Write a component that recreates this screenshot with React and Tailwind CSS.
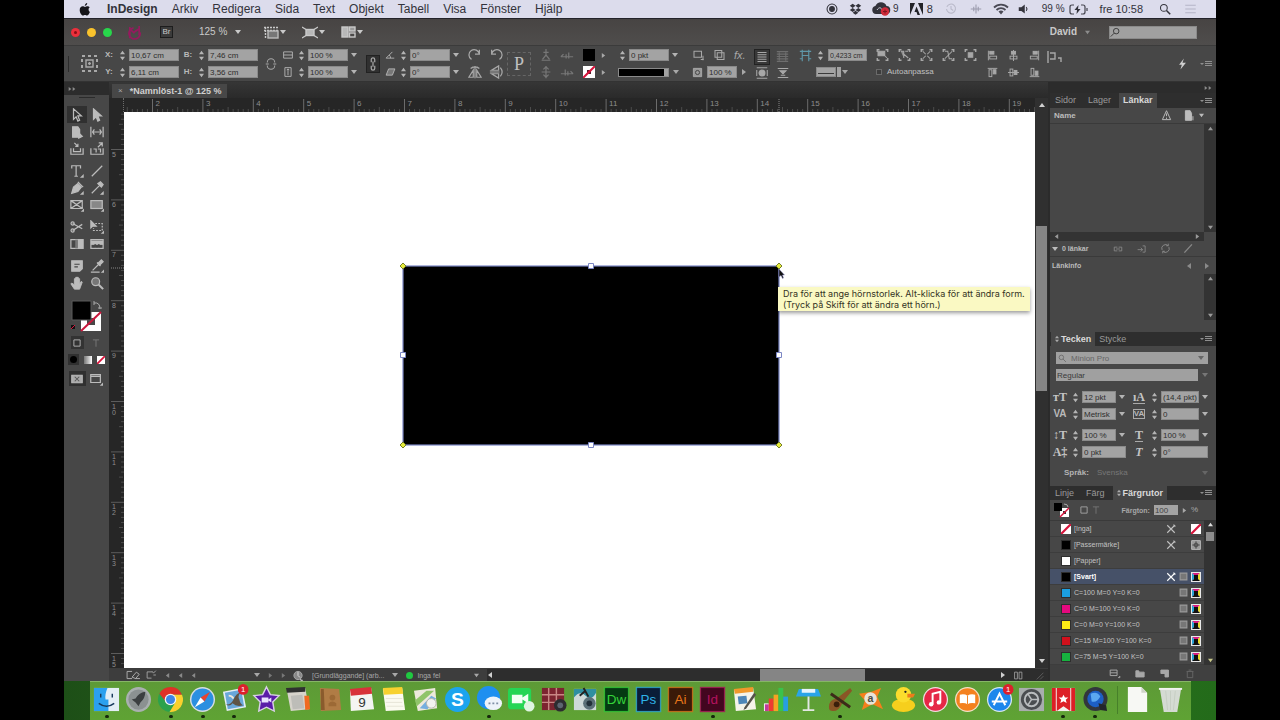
import React from "react";

/* ---------- small drawing helpers ---------- */

function Glyph({ w = 14, h = 14, vb = "0 0 16 16", className = "", children }) {
  return (
    <svg
      width={w}
      height={h}
      viewBox={vb}
      className={"shrink-0 " + className}
      fill="none"
      stroke="currentColor"
      strokeWidth="1.4"
      aria-hidden="true"
    >
      {children}
    </svg>
  );
}

function IconButton({ label, className = "", children }) {
  return (
    <button type="button" aria-label={label} className={"flex shrink-0 items-center justify-center " + className}>
      {children}
    </button>
  );
}

function Triangle({ dir = "down", size = 6, className = "" }) {
  const d = {
    down: "M0 1h6L3 5z",
    up: "M0 5h6L3 1z",
    left: "M5 0v6L1 3z",
    right: "M1 0v6l4-3z",
  }[dir];
  return (
    <svg width={size} height={size} viewBox="0 0 6 6" className={"shrink-0 " + className} fill="currentColor" aria-hidden="true">
      <path d={d} />
    </svg>
  );
}

function Spinner({ label }) {
  return (
    <span className="flex w-2 shrink-0 flex-col items-center justify-center gap-px text-[#b4b4b4]">
      <button type="button" aria-label={"Öka " + label} className="flex">
        <Triangle dir="up" size={5} />
      </button>
      <button type="button" aria-label={"Minska " + label} className="flex">
        <Triangle size={5} />
      </button>
    </span>
  );
}

const fieldBase =
  "h-3 min-w-0 border border-[#8a8a8a] bg-[#a3a3a3] px-px leading-[10px] text-[#2e2e2e] outline-none";
const fieldClass = fieldBase + " text-[8px]";

function Field({ label, value, lead, width = "w-[50px]", arrow, leadWidth = "w-3" }) {
  return (
    <div className="flex h-3 items-center gap-[3px]">
      {lead !== undefined && (
        <span className={"flex shrink-0 items-center justify-center text-[8px] font-bold leading-none text-[#b9b9b9] " + leadWidth}>{lead}</span>
      )}
      <Spinner label={label} />
      <input aria-label={label} defaultValue={value} className={fieldClass + " " + width} />
      {arrow && (
        <IconButton label={"Välj " + label} className="text-[#b4b4b4]">
          <Triangle />
        </IconButton>
      )}
    </div>
  );
}

/* ---------- top bars ---------- */

const menus = ["Arkiv", "Redigera", "Sida", "Text", "Objekt", "Tabell", "Visa", "Fönster", "Hjälp"];

function MenuBar() {
  return (
    <header className="flex h-[18px] shrink-0 items-center bg-[#dcdcec] text-[12px] leading-none text-[#33333b]">
      <IconButton label="Apple" className="ml-[15px] mr-4">
        <svg width="12" height="13" viewBox="0 0 12 13" fill="#15151a" aria-hidden="true">
          <path d="M8.2 0C8.3 1.4 7.2 2.8 5.8 2.9 5.7 1.5 6.9.2 8.2 0zM10.9 9.1C10.2 10.9 9.1 12.6 8 12.6c-.8 0-1.1-.5-2-.5s-1.2.5-2 .5C2.5 12.6.7 9.6.7 7 .7 4.6 2.2 3.3 3.7 3.3c.9 0 1.7.6 2.3.6.6 0 1.5-.7 2.6-.7.9 0 1.6.4 2.1 1.1C9 5.4 9.3 8.2 10.9 9.1z" />
        </svg>
      </IconButton>
      <nav className="flex items-center gap-[14px]">
        <button type="button" className="font-bold">InDesign</button>
        {menus.map((m) => (
          <button type="button" key={m}>{m}</button>
        ))}
      </nav>
      <div className="ml-auto mr-[18px] flex items-center gap-[9px]">
        <Glyph w={12} h={12}>
          <circle cx="8" cy="8" r="6.6" />
          <circle cx="8" cy="8" r="3.2" fill="currentColor" />
        </Glyph>
        <Glyph w={13} h={13} className="ml-[2px]">
          <path fill="currentColor" stroke="none" d="M4.5 1 8 3.5 4.5 6 1 3.5zM11.500 1 15 3.500 11.500 6 8 3.500zM4.500 6 8 8.500 4.500 11 1 8.500zM11.500 6 15 8.500 11.500 11 8 8.500zM8 9.500l3.500 2.500L8 14.500 4.500 12z" />
        </Glyph>
        <span className="flex items-center gap-[2px] text-[10px]">
          <svg width="20" height="14" viewBox="0 0 20 14" aria-hidden="true">
            <path fill="#33333b" d="M5 12a4 4 0 0 1-.6-7.900A6 6 0 0 1 15.500 4 4 4 0 0 1 15 12z" />
            <path d="M6 8c2-3 4-3 5 0" fill="none" stroke="#c9c9d6" />
            <circle cx="14" cy="9.500" r="4.200" fill="#cf2b3a" />
            <path d="M14 7.500v4M12 9.500h4" stroke="#7d1520" />
          </svg>
          9
        </span>
        <span className="ml-[2px] flex items-center gap-1 text-[11px]">
          <svg width="13" height="12" viewBox="0 0 13 12" fill="#222228" aria-hidden="true">
            <path d="M0 0h5L0 12zM8 0h5v12zM6.500 3.500 10 12H7.500L6.500 9H4.500z" />
          </svg>
          8
        </span>
        <Glyph w={12} h={12} className="ml-[3px] text-[#b9b9c9]">
          <path d="M2.500 5A6 6 0 1 1 2 8M8 4v4l3 2" />
        </Glyph>
        <Glyph w={12} h={12} className="ml-1 text-[#9c9cad]">
          <path d="M1 8h14M8 2v12M5 5v6M11 5v6" />
        </Glyph>
        <svg width="16" height="12" viewBox="0 0 16 12" fill="none" stroke="#4a4a55" strokeWidth="1.800" className="ml-[2px]" aria-hidden="true">
          <path d="M1 4.500a10 10 0 0 1 14 0M3.500 7a6.500 6.500 0 0 1 9 0" />
          <path d="M5.500 8.500a4 4 0 0 1 5 0L8 11.500z" fill="#4a4a55" stroke="none" />
        </svg>
        <Glyph w={12} h={12}>
          <path fill="currentColor" stroke="none" d="M1 5.500h3.500L9 2v12L4.500 10.500H1z" />
          <path d="M11 5.500q2 2.500 0 5" />
        </Glyph>
        <span className="ml-[3px] flex items-center gap-1 text-[10px]">
          99 %
          <svg width="19" height="11" viewBox="0 0 19 11" fill="none" stroke="#44444e" strokeWidth="1.200" aria-hidden="true">
            <path d="M5 1H3Q1 1 1 3v5q0 2 2 2h2M12 1h2q2 0 2 2v5q0 2-2 2h-2M18 4v3" />
            <path d="M9.500 1 5.500 6h2.500l-.5 4 4-5H9z" fill="#33333b" stroke="none" />
          </svg>
        </span>
        <span className="ml-[3px] text-[11px]">fre 10:58</span>
        <IconButton label="Sök" className="ml-[7px]">
          <Glyph w={12} h={12}>
            <circle cx="6.500" cy="6.500" r="4.500" />
            <path d="m10 10 5 5" strokeWidth="2" />
          </Glyph>
        </IconButton>
        <IconButton label="Notiscenter" className="ml-[3px] text-[#b4b4c6]">
          <Glyph w={15} h={12}>
            <path d="M1 3h14M1 8h14M1 13h14" />
          </Glyph>
        </IconButton>
      </div>
    </header>
  );
}

function AppBar() {
  return (
    <div className="flex h-7 shrink-0 items-center border-y border-t-[#23232a] border-b-[#3b3b3b] bg-linear-to-b from-[#474443] to-[#4f4d4c] text-[#c9c9c9]">
      <div className="ml-[7px] flex items-center gap-[7px]">
        <button type="button" aria-label="Stäng" className="flex size-[9px] items-center justify-center rounded-full bg-[#ec2f3b]">
          <span className="size-[3px] rounded-full bg-[#8a0d15]" />
        </button>
        <button type="button" aria-label="Minimera" className="size-[9px] rounded-full bg-[#f9c22c]" />
        <button type="button" aria-label="Zooma" className="size-[9px] rounded-full bg-[#28d64b]" />
      </div>
      <svg width="15" height="15" viewBox="0 0 16 16" fill="none" stroke="#951a5e" strokeWidth="1.800" className="ml-[15px]" aria-hidden="true">
        <path d="M3 2v12M7 3a6 6 0 1 0 7 5M13 1v10M3 4l5 5M7 8l6-4" />
      </svg>
      <button type="button" className="ml-[18px] flex h-3 w-[13px] items-center justify-center border border-[#1d1d1d] bg-[#3b3b3b] text-[8px] leading-none">Br</button>
      <button type="button" className="ml-[26px] flex items-center gap-2 text-[10px] leading-none">
        125 % <Triangle />
      </button>
      <button type="button" aria-label="Visningsalternativ" className="ml-[23px] flex items-center gap-px">
        <Glyph w={15} h={13} vb="0 0 15 13">
          <path d="M0 1.500h15M1.500 1v12M0 4.500h15" strokeDasharray="2 1" />
          <rect x="4" y="5" width="10" height="7" fill="#777" stroke="#bbb" />
        </Glyph>
        <Triangle />
      </button>
      <button type="button" aria-label="Skärmläge" className="ml-4 flex items-center gap-px">
        <Glyph w={16} h={13} vb="0 0 16 13">
          <rect x="4" y="3.500" width="8" height="6" fill="#b8b8b8" />
          <path d="m0 1 4 2.500M16 1l-4 2.500M0 12l4-2.500M16 12l-4-2.500" />
        </Glyph>
        <Triangle />
      </button>
      <button type="button" aria-label="Ordna dokument" className="ml-4 flex items-center gap-px">
        <Glyph w={15} h={12} vb="0 0 15 12">
          <rect x="1" y="1" width="6" height="10" fill="#b8b8b8" />
          <rect x="8.500" y="1" width="5.500" height="4" fill="#999" />
          <rect x="8.500" y="7" width="5.500" height="4" />
        </Glyph>
        <Triangle />
      </button>
      <button type="button" className="ml-auto flex items-center gap-2 text-[10px] font-bold leading-none">
        David <Triangle size={5} className="text-[#8c8c8c]" />
      </button>
      <label className="ml-[19px] mr-[19px] flex h-[13px] w-[88px] items-center border border-[#8a8a8a] bg-[#a0a0a0] text-[#3a3a3a]">
        <Glyph w={11} h={11}>
          <circle cx="9" cy="6" r="4" />
          <path d="m6 9-5 5" />
        </Glyph>
        <input aria-label="Sök i hjälpen" className="min-w-0 flex-1 bg-transparent text-[8px] outline-none" />
      </label>
    </div>
  );
}

function Two({ className = "", children }) {
  return <div className={"flex shrink-0 flex-col justify-center gap-[5px] " + className}>{children}</div>;
}

function Row({ className = "", children }) {
  return <div className={"flex h-3 items-center " + className}>{children}</div>;
}

function FitIcon({ kind }) {
  const inner = [
    <path key="a" d="M2 3h9v6H2zM8 6l6 6" fill="#a8a8a8" />,
    <path key="b" d="M3 3h4v9M6 6l7 6M9 3h4" fill="#8f8f8f" />,
    <path key="c" d="m3 3 4 4M13 3 9 7M3 13l4-4M13 13 9 9" />,
    <path key="d" d="M3 3h4l2 10h4M3 13l10-10" />,
    <path key="e" d="M5 5h6v6H5z" fill="#a8a8a8" />,
  ][kind];
  return (
    <Glyph w={13} h={12}>
      <path d="M1 4V1h3M12 1h3v3M15 12v3h-3M4 15H1v-3" strokeWidth="1.800" />
      {inner}
    </Glyph>
  );
}

function AlignIcon({ kind }) {
  const d = [
    <><path d="M2 1v14" /><rect x="4" y="2" width="6" height="4" fill="currentColor" /><rect x="4" y="9" width="10" height="4" /></>,
    <><path d="M8 0v16" /><rect x="5" y="2" width="6" height="4" fill="currentColor" /><rect x="3" y="9" width="10" height="4" /></>,
    <><path d="M14 1v14" /><rect x="6" y="2" width="6" height="4" fill="currentColor" /><rect x="2" y="9" width="10" height="4" /></>,
    <><path d="M1 2h14" /><rect x="3" y="4" width="4" height="10" /><rect x="9" y="4" width="4" height="6" fill="currentColor" /></>,
    <><path d="M0 8h16" /><rect x="3" y="3" width="4" height="10" /><rect x="9" y="5" width="4" height="6" fill="currentColor" /></>,
    <><path d="M1 14h14" /><rect x="3" y="2" width="4" height="10" /><rect x="9" y="6" width="4" height="6" fill="currentColor" /></>,
  ][kind];
  return <Glyph w={11} h={11}>{d}</Glyph>;
}

function ControlBar() {
  return (
    <div className="flex h-9 shrink-0 items-stretch overflow-hidden border-b border-[#333] bg-[#474747] text-[#a8a8a8]">
      <div className="flex w-[39px] shrink-0 items-center gap-3 pl-1">
        <span className="h-4 w-px bg-[#2b2b2b]" />
        <IconButton label="Referenspunkt">
          <Glyph w={17} h={17} vb="0 0 17 17">
            <path d="M1 1h15v15H1z" strokeDasharray="3 3" strokeWidth="2" />
            <path d="M5 5h7v7H5zM8.500 7v3M7 8.500h3" />
          </Glyph>
        </IconButton>
      </div>
      <Two className="w-[79px]">
        <Field label="X-position" lead="X:" value="10,67 cm" />
        <Field label="Y-position" lead="Y:" value="6,11 cm" />
      </Two>
      <Two className="w-[78px]">
        <Field label="Bredd" lead="B:" value="7,46 cm" />
        <Field label="Höjd" lead="H:" value="3,56 cm" />
      </Two>
      <IconButton label="Begränsa proportioner" className="w-[22px]">
        <Glyph w={12} h={14}>
          <path d="M3 6a5 5 0 0 1 10 0M3 10a5 5 0 0 0 10 0M1 8h4M11 8h4" />
        </Glyph>
      </IconButton>
      <Two className="w-[80px]">
        <Field label="X-skala" width="w-10" arrow value="100 %" lead={<Glyph w={12} h={10}><path d="M1 3h14v10H1zM1 8h14" /></Glyph>} />
        <Field label="Y-skala" width="w-10" arrow value="100 %" lead={<Glyph w={12} h={10}><path d="M3 1h10v14H3zM8 3v10M6 5l2-2 2 2" /></Glyph>} />
      </Two>
      <IconButton label="Lås skala" className="mx-1 my-auto h-[18px] w-[14px] border border-[#222] bg-[#303030]">
        <Glyph w={8} h={14} vb="0 0 8 16">
          <path d="M2 6V3q0-2 2-2t2 2v3M2 10v3q0 2 2 2t2-2v-3M4 5v6" />
        </Glyph>
      </IconButton>
      <Two className="w-[80px]">
        <Field label="Rotationsvinkel" width="w-10" arrow value="0°" lead={<Glyph w={11} h={10}><path d="M14 13H1L11 3M8 13a6 6 0 0 0-2-5" /></Glyph>} />
        <Field label="Skevningsvinkel" width="w-10" arrow value="0°" lead={<Glyph w={11} h={10}><path d="M5 3h10l-4 10H1z" fill="#777" /></Glyph>} />
      </Two>
      <div className="my-auto grid w-[43px] shrink-0 grid-cols-2 place-items-center gap-y-[3px]">
        <IconButton label="Rotera medurs"><Glyph><path d="M4 13A6 6 0 1 1 13 7M13 2v5H8" /></Glyph></IconButton>
        <IconButton label="Rotera moturs"><Glyph><path d="M12 13A6 6 0 1 0 3 7M3 2v5h5" /></Glyph></IconButton>
        <IconButton label="Vänd horisontellt"><Glyph><path d="M8 1v14M6 6v8H1zM10 6v8h5zM3 4q5-4 10 0" /></Glyph></IconButton>
        <IconButton label="Vänd vertikalt"><Glyph><path d="M1 8h11M3 6h8V1zM3 10h8v5zM13 3q4 5 0 10" /></Glyph></IconButton>
      </div>
      <div className="my-auto flex h-6 w-6 shrink-0 items-center justify-center border border-dashed border-[#666] font-[Liberation_Serif,serif] text-[18px] leading-none text-[#c0c0c0]">P</div>
      <div className="my-auto grid w-[46px] shrink-0 grid-cols-2 place-items-center gap-y-[3px] pl-1 text-[#777]">
        <IconButton label="Markera behållare"><Glyph><path d="M8 1v7M5 5h6M3 14h10M8 8l-4 5M8 8l4 5" /></Glyph></IconButton>
        <IconButton label="Föregående objekt"><Glyph><path d="M1 10h14M4 7l-3 3M10 5v7M7 7v5" /></Glyph></IconButton>
        <IconButton label="Markera innehåll"><Glyph><path d="M8 1v14M3 8h10M5 5l3-3 3 3M5 11l3 3 3-3" /></Glyph></IconButton>
        <IconButton label="Nästa objekt"><Glyph><path d="M1 10h14M12 7l3 3M6 5v7M9 7v5" /></Glyph></IconButton>
      </div>
      <Two className="w-[41px] pl-[6px]">
        <Row className="gap-[6px]">
          <button type="button" aria-label="Fyllning" className="size-3 bg-black" />
          <Triangle dir="right" size={5} />
        </Row>
        <Row className="gap-[6px]">
          <button type="button" aria-label="Linje">
            <svg width="12" height="12" viewBox="0 0 12 12" aria-hidden="true">
              <path fill="#fff" d="M0 0h12v12H0z" />
              <path d="M4 4h4v4H4z" fill="#5c1a2c" />
              <path d="M0 12 12 0" stroke="#d8143c" strokeWidth="2" />
            </svg>
          </button>
          <Triangle dir="right" size={5} />
        </Row>
      </Two>
      <Two className="w-[66px]">
        <Field label="Linjetjocklek" width="w-10" arrow value="0 pkt" />
        <Row className="gap-1">
          <button type="button" aria-label="Linjetyp" className="flex h-[9px] w-[51px] justify-end border border-[#8a8a8a] bg-black">
            <span className="h-full w-1 bg-[#a3a3a3]" />
          </button>
          <Triangle />
        </Row>
      </Two>
      <Two className="w-[67px] pl-2">
        <Row className="gap-2">
          <Glyph w={13} h={12}><path d="M2 3h10v8H2zM14 9v6M11 14h4" /></Glyph>
          <Glyph w={13} h={12}><path d="M2 2h9v9H2zM5 5h9v9H5z" /></Glyph>
          <button type="button" aria-label="Effekter" className="text-[11px] italic leading-none">fx.</button>
        </Row>
        <Row className="gap-1">
          <Glyph w={11} h={11}><path d="M2 2h12v12H2z" fill="#999" /><circle cx="8" cy="8" r="3" stroke="#444" /></Glyph>
          <input aria-label="Opacitet" defaultValue="100 %" className={fieldClass + " w-[30px]"} />
          <Triangle dir="right" />
        </Row>
      </Two>
      <div className="my-auto grid w-[42px] shrink-0 grid-cols-2 place-items-center gap-y-[2px]">
        <IconButton label="Ingen figursättning" className="size-4 border border-[#222] bg-[#383838]"><Glyph w={12} h={12}><path d="M2 2h12M2 5h12M2 8h12M2 11h12M2 14h12" /></Glyph></IconButton>
        <IconButton label="Runt ramen" className="text-[#6e6e6e]"><Glyph w={13} h={13}><path d="M1 2h14M1 5h14M1 8h14M1 11h14M1 14h14M4 3v10M12 3v10" /></Glyph></IconButton>
        <IconButton label="Runt formen"><Glyph w={12} h={12}><path d="M1 1h14M1 15h14M1 4v8M15 4v8" /><circle cx="8" cy="8" r="4" fill="currentColor" /></Glyph></IconButton>
        <IconButton label="Hoppa över objekt"><Glyph w={12} h={12}><path d="M1 2h14M1 14h14M4 5h8l-4 4zM5 11h6" fill="currentColor" /></Glyph></IconButton>
      </div>
      <Two className="w-[78px] pl-[6px]">
        <Row className="gap-1">
          <Glyph w={13} h={13} className="text-[#5f97a8]"><path d="M1 3h14M4 1v14M12 1v14M4 8h8M1 12h3M12 12h3" /></Glyph>
          <Spinner label="Hörnradie" />
          <input aria-label="Hörnradie" defaultValue="0,4233 cm" className={fieldBase + " w-[39px] text-[7px]"} />
        </Row>
        <Row className="gap-px pl-[17px]">
          <button type="button" aria-label="Hörnform" className="flex h-[10px] w-5 items-center justify-center border border-[#8a8a8a] bg-[#a3a3a3]">
            <span className="h-1 w-4 border-b border-[#3a3a3a]" />
          </button>
          <span className="h-[10px] w-1 bg-[#a3a3a3]" />
          <Triangle />
        </Row>
      </Two>
      <Two className="w-[112px] pl-[5px]">
        <Row className="gap-[9px]">
          {[0, 1, 2, 3, 4].map((k) => <IconButton key={k} label={"Anpassning " + (k + 1)}><FitIcon kind={k} /></IconButton>)}
        </Row>
        <label className="flex h-3 items-center gap-[5px] text-[8px] leading-none text-[#c0c0c0]">
          <input type="checkbox" className="size-[6px] appearance-none border border-[#6a6a6a] bg-[#3d3d3d]" />
          Autoanpassa
        </label>
      </Two>
      <Two className="w-[64px] pl-[4px]">
        <Row className="gap-[10px]">{[0, 1, 2].map((k) => <IconButton key={k} label={"Justera " + (k + 1)}><AlignIcon kind={k} /></IconButton>)}</Row>
        <Row className="gap-[10px]">{[3, 4, 5].map((k) => <IconButton key={k} label={"Justera " + (k + 1)}><AlignIcon kind={k} /></IconButton>)}</Row>
      </Two>
      <div className="pt-[5px]">
        <Glyph w={16} h={12} vb="0 0 16 12"><path d="M1 0v12M3 2h5v6H3M11 7h3v4" /></Glyph>
      </div>
      <div className="ml-auto mr-1 flex items-center gap-3">
        <IconButton label="Snabbverkställ" className="text-[#d0d0d0]">
          <Glyph w={11} h={14}><path d="M10 0 3 9h4l-2 7 8-10H8z" fill="currentColor" stroke="none" /></Glyph>
        </IconButton>
        <PanelMenu />
      </div>
    </div>
  );
}

function PanelMenu() {
  return (
    <IconButton label="Panelmeny" className="text-[#8f8f8f]">
      <svg width="12" height="8" viewBox="0 0 12 8" aria-hidden="true">
        <path d="M0 3h4L2 5z" fill="currentColor" />
        <path d="M5 1.500h7M5 3.500h7M5 5.500h7" stroke="currentColor" />
      </svg>
    </IconButton>
  );
}

/* ---------- tools ---------- */

const toolGroups = [
  [
    ["Markering", <path d="M4 1v12l3-3 2 5 2-1-2-5h4z" fill="#333" />],
    ["Direktmarkering", <path d="M4 1v12l3-3 2 5 2-1-2-5h4z" fill="currentColor" />],
    ["Sida", <><path d="M3 2h6l2 3v9H3z" fill="currentColor" /><path d="M10 9v6l4-2z" fill="currentColor" /></>],
    ["Mellanrum", <path d="M1 2v12M15 2v12M3 8h10M5 5 3 8l2 3M11 5l2 3-2 3" />],
    ["Samla innehåll", <path d="M1 7v7h14V7M4 7v4h8V7M5 1l4 4M9 2v3H6" />],
    ["Placera innehåll", <path d="M1 7v7h14V7M4 8h3v4M9 8h3v4M9 6l5-5M10 1h4v4" />],
  ],
  [
    ["Text", <path d="M2 5V2h10v3M7 2v12M5 14h4M15 13v2h-2z" />],
    ["Linje", <path d="M2 14 14 2" />],
    ["Rit", <><path d="M2 14 4 7l5-4 4 4-4 5z" fill="currentColor" /><path d="m9 1 6 6M15 13v2h-2z" /></>],
    ["Penna", <path d="m2 14 9-9M9 3l3-2 3 3-2 3zM15 13v2h-2z" fill="currentColor" />],
    ["Rektangelram", <path d="M1 3h13v9H1zM1 3l13 9M14 3 1 12M16 13v2h-2z" />],
    ["Rektangel", <><rect x="1" y="3" width="13" height="9" fill="#888" /><path d="M16 13v2h-2z" /></>],
  ],
  [
    ["Sax", <><path d="m3 4 11 6M3 12l11-7" /><circle cx="3" cy="4" r="1.800" /><circle cx="3" cy="12" r="1.800" /></>],
    ["Omforma fritt", <><path d="M1 1v8l2-2h4z" fill="currentColor" /><path d="M6 4h8v8H4V9" strokeDasharray="2 1.500" /><path d="M16 13v2h-2z" /></>],
    ["Övertoning", <><rect x="1" y="3" width="14" height="10" /><path d="M6 3h3v10H6z" fill="#777" stroke="none" /><path d="M9 3h6v10H9z" fill="currentColor" stroke="none" /></>],
    ["Övertoningsludd", <><rect x="1" y="3" width="14" height="10" /><path d="M1 4h14v5H1z" fill="currentColor" stroke="none" /><path d="M3 11h2M7 11h2M11 11h2M5 9h2M9 9h2" stroke="#444" /></>],
  ],
  [
    ["Anteckning", <><path d="M2 2h12v9l-3 3H2z" fill="currentColor" /><path d="M5 6h6M5 9h4" stroke="#444" /></>],
    ["Pipett", <><path d="m3 13 7-7M8 4l4 4M10 6l4-4" /><path d="M9 5l4-4 2 2-4 4z" fill="currentColor" /><path d="M1 15h10M16 13v2h-2z" /></>],
    ["Hand", <path d="M5 15 1 9l1-1 3 2V3h1.500v5V1.500H8V8V1.500h1.500V8V3H11v6l2-3 1 1-3 8z" fill="currentColor" strokeWidth="1" />],
    ["Zoom", <><circle cx="6.500" cy="6.500" r="4.500" fill="#777" /><path d="m10 10 5 5" strokeWidth="2.400" /></>],
  ],
];

function NoneSwatch({ size = 9, className = "" }) {
  return (
    <svg width={size} height={size} viewBox="0 0 10 10" className={"shrink-0 " + className} aria-hidden="true">
      <path d="M0 0h10v10H0z" fill="#fff" />
      <path d="M0 10 10 0" stroke="#d8143c" strokeWidth="2.200" />
    </svg>
  );
}

function Tools() {
  return (
    <aside className="flex w-[45px] shrink-0 flex-col bg-[#474747] text-[#bcbcbc]">
      <div className="flex h-[13px] shrink-0 items-center bg-[#2c2c2c] pl-1 text-[#8c8c8c]">
        <Triangle dir="right" size={4} />
        <Triangle dir="right" size={4} />
      </div>
      <div className="mx-auto mt-[2px] mb-2 h-px w-4 shrink-0 bg-[#2b2b2b]" />
      <div className="flex flex-col gap-[5px]">
        {toolGroups.map((g, i) => (
          <div key={i} className="ml-[3px] grid w-10 grid-cols-2">
            {g.map(([name, art]) => (
              <IconButton key={name} label={name} className={"h-[17px] " + (name === "Markering" ? "bg-[#303030]" : "")}>
                <Glyph>{art}</Glyph>
              </IconButton>
            ))}
          </div>
        ))}
      </div>
      <div className="mx-auto mt-2 shrink-0">
        <svg width="34" height="34" viewBox="0 0 34 34" aria-hidden="true">
          <path d="M11 13h20v19H11z" fill="#fff" />
          <path d="M17 19h8v7h-8z" fill="#474747" />
          <path d="M11 32 31 13" stroke="#c9173c" strokeWidth="2" />
          <path d="M2 2h19v19H2z" fill="#000" stroke="#5a5a5a" />
          <path d="M24 4q6-1 6 6M24 2v4M28 9h4" stroke="#aaa" fill="none" />
          <path d="M1 26h4v4H1z" fill="#111" />
          <path d="M1 30l4-4" stroke="#d8143c" />
        </svg>
      </div>
      <div className="mx-1 mt-[2px] grid h-[15px] shrink-0 grid-cols-2 items-center justify-items-center">
        <IconButton label="Formatering påverkar behållare" className="size-[13px] bg-[#333]"><Glyph w={10} h={10}><path d="M3 3h10v10H3z" /></Glyph></IconButton>
        <IconButton label="Formatering påverkar text" className="text-[#7b7b7b]"><Glyph w={10} h={10}><path d="M3 3h10M8 3v11" /></Glyph></IconButton>
      </div>
      <div className="mx-1 mt-[3px] flex h-[13px] shrink-0 items-center justify-between">
        <button type="button" aria-label="Använd färg" className="flex size-[11px] items-center justify-center bg-[#303030]"><span className="size-[7px] rounded-full bg-black" /></button>
        <button type="button" aria-label="Använd övertoning" className="h-2 w-2 bg-linear-to-r from-[#777] to-white" />
        <button type="button" aria-label="Använd ingen"><NoneSwatch size={8} /></button>
      </div>
      <div className="mx-1 mt-1 grid h-[17px] shrink-0 grid-cols-2 items-center justify-items-center">
        <IconButton label="Normal" className="h-[15px] w-[17px] bg-[#303030]"><Glyph w={12} h={12}><path d="M1 3h14v10H1z" fill="#aaa" /><path d="m5 5 6 6M11 5l-6 6" stroke="#555" /></Glyph></IconButton>
        <IconButton label="Förhandsvisa"><Glyph><path d="M2 3h11v9H2zM2 5h11M16 13v2h-2z" /></Glyph></IconButton>
      </div>
    </aside>
  );
}

/* ---------- document ---------- */

const UNIT = 50.4;
const hMarks = Array.from({ length: 18 }, (_, i) => i);
const vMarks = Array.from({ length: 11 }, (_, i) => i);
const fractions = [1, 2, 3, 4, 5, 6, 7, 8, 9];

function HorizontalRuler() {
  return (
    <svg className="h-full min-w-0 flex-1" fontSize="8" fill="#8d8d8d" aria-hidden="true">
      {[-1, ...hMarks].map((i) => {
        const x = 28.5 + i * UNIT;
        return (
          <g key={i}>
            {i >= 0 && <path d={`M${x} 1v13`} stroke="#6c6c6c" />}
            {i >= 0 && <text x={x + 3} y="8">{i + 2}</text>}
            {fractions.map((f) => (
              <path key={f} d={`M${x + (f * UNIT) / 10} ${f === 5 ? 9 : 11}v5`} stroke="#4c4c4c" />
            ))}
          </g>
        );
      })}
      <path d="M655 1v13" stroke="#888" strokeDasharray="1 1" />
    </svg>
  );
}

function VerticalRuler() {
  return (
    <svg className="h-full w-[15px] shrink-0 bg-[#262626]" fontSize="7" fill="#8d8d8d" aria-hidden="true">
      {[-1, ...vMarks].map((i) => {
        const y = 37.5 + i * UNIT;
        return (
          <g key={i}>
            {i >= 0 && <path d={`M2 ${y}h13`} stroke="#5c5c5c" />}
            {i >= 0 &&
              String(i + 5)
                .split("")
                .map((c, k) => (
                  <text key={k} x="3" y={y + 7 + k * 6}>{c}</text>
                ))}
            {fractions.map((f) => (
              <path key={f} d={`M${f === 5 ? 10 : 12} ${y + (f * UNIT) / 10}h4`} stroke="#4c4c4c" />
            ))}
          </g>
        );
      })}
      <path d="M2 156h13" stroke="#888" strokeDasharray="1 1" />
    </svg>
  );
}

function Artwork() {
  return (
    <div className="relative min-w-0 flex-1 overflow-hidden bg-white">
      <svg className="absolute left-[274px] top-[149px]" width="388" height="190" viewBox="0 0 388 190" aria-hidden="true">
        <rect x="5" y="5" width="376" height="179" fill="#000" stroke="#7b86c4" strokeWidth="1.200" />
        <g fill="#e6ec3c" stroke="#77802a">
          <path d="m5 2 3 3-3 3-3-3zM381 2l3 3-3 3-3-3zM5 181l3 3-3 3-3-3zM381 181l3 3-3 3-3-3z" />
        </g>
        <g fill="#fff" stroke="#7b86c4">
          <path d="M190.500 2.500h5v5h-5zM190.500 181.500h5v5h-5zM2.500 91.500h5v5h-5zM378.500 91.500h5v5h-5z" />
        </g>
        <path d="M381 8v8l2-1.500 1.500 3 1-.5-1-3h2z" fill="#111" stroke="#9a9ad0" strokeWidth=".5" />
      </svg>
      <div
        role="tooltip"
        className="absolute left-[654px] top-[175px] whitespace-nowrap bg-[#faf9c3] px-[5px] py-px font-[Inter,sans-serif] text-[9px] leading-[11px] text-[#33331f] shadow-[0_2px_4px_rgba(0,0,0,0.4)]"
      >
        Dra för att ange hörnstorlek. Alt-klicka för att ändra form.
        <br />
        (Tryck på Skift för att ändra ett hörn.)
      </div>
    </div>
  );
}

function Document() {
  return (
    <main className="flex min-w-0 flex-1 flex-col bg-[#2f2f2f]">
      <div className="flex h-4 shrink-0 items-end bg-linear-to-b from-[#363636] to-[#2a2a2a] pl-[3px]">
        <div className="flex h-[14px] items-center gap-[7px] bg-[#474747] px-[6px] text-[9px] font-bold leading-none text-[#d0d0d0]">
          <button type="button" aria-label="Stäng dokument" className="text-[8px] font-normal text-[#aaa]">×</button>
          <span>*Namnlöst-1 @ 125 %</span>
        </div>
      </div>
      <div className="flex min-h-0 flex-1">
        <div className="flex min-w-0 flex-1 flex-col">
          <div className="flex h-[14px] shrink-0 bg-[#262626]">
            <div className="w-[15px] shrink-0 border-r border-dotted border-[#6c6c6c]" />
            <HorizontalRuler />
          </div>
          <div className="flex min-h-0 flex-1">
            <VerticalRuler />
            <Artwork />
          </div>
        </div>
        <div className="flex w-[13px] shrink-0 flex-col items-center bg-[#303030] py-1 text-[#d0d0d0]">
          <IconButton label="Rulla upp"><Triangle dir="up" /></IconButton>
          <div className="flex min-h-0 w-full flex-1 flex-col items-center">
            <div className="flex-[118]" />
            <div className="w-[11px] flex-[164] bg-[#858585]" />
            <div className="flex-[267]" />
          </div>
          <IconButton label="Rulla ned"><Triangle /></IconButton>
        </div>
      </div>
      <div className="flex h-[13px] shrink-0 items-center border-t border-[#3c3c3c] bg-[#3d3d3d] pl-[17px] text-[7px] leading-none text-[#a8a8a8]">
        <Glyph w={15} h={10} vb="0 0 20 14"><path d="M8 2H1v10h7M8 10l6-7 4 3-5 6zM12 12h7" /></Glyph>
        <Glyph w={11} h={10} className="ml-[5px]"><path d="M9 3H1v10h7M9 2l2 3 4-4M11 8h4" /></Glyph>
        <span className="ml-2 flex gap-2 text-[#8a8a8a]">
          <Triangle dir="left" size={5} />
          <Triangle dir="left" size={5} />
          <Triangle dir="left" size={5} />
        </span>
        <span className="ml-[58px] flex items-center gap-2">
          <Triangle />
          <Triangle dir="right" size={5} className="text-[#777]" />
          <Triangle dir="right" size={5} className="text-[#777]" />
        </span>
        <Glyph w={12} h={11} className="ml-[6px]"><circle cx="8" cy="8" r="6" fill="#888" /><path d="M8 3v5l3 3M12 13v2h3" stroke="#ddd" /></Glyph>
        <button type="button" className="ml-[8px] flex items-center gap-2">
          [Grundläggande] (arb...
          <Triangle />
        </button>
        <button type="button" className="ml-2 flex items-center gap-1">
          <span className="size-[7px] rounded-full bg-[#1fc941]" /> Inga fel
          <Triangle size={5} className="ml-[30px]" />
        </button>
        <div className="ml-2 flex h-full min-w-0 flex-1 items-center gap-1 bg-[#2d2d2d] pr-1">
          <IconButton label="Rulla vänster" className="text-[#d0d0d0]"><Triangle dir="left" /></IconButton>
          <div className="flex h-full min-w-0 flex-1">
            <div className="flex-[265]" />
            <div className="flex-[106] bg-[#858585]" />
            <div className="flex-[132]" />
          </div>
          <IconButton label="Rulla höger" className="text-[#d0d0d0]"><Triangle dir="right" /></IconButton>
          <IconButton label="Dela layoutvy" className="ml-1"><Glyph w={9} h={9}><path d="M1 2h5v12H1zM9 2h5v12H9z" /></Glyph></IconButton>
          <Glyph w={9} h={9} className="ml-2 text-[#666]"><path d="M15 3 3 15M15 9l-6 6" /></Glyph>
        </div>
      </div>
    </main>
  );
}

/* ---------- right panels ---------- */

function Tabs({ items, active, h = "h-[14px]" }) {
  return (
    <div className={"flex shrink-0 items-stretch bg-[#2e2e2e] pl-px pr-1 text-[9px] leading-none text-[#9a9a9a] " + h}>
      {items.map((t) => (
        <button
          type="button"
          key={t}
          className={"flex items-center gap-[2px] px-1 " + (t === active ? "bg-[#474747] font-bold text-[#dadada]" : "mr-1")}
        >
          {t === active && t !== "Länkar" && (
            <span className="flex flex-col text-[#aaa]">
              <Triangle dir="up" size={4} />
              <Triangle size={4} />
            </span>
          )}
          {t}
        </button>
      ))}
      <span className="ml-auto flex items-center"><PanelMenu /></span>
    </div>
  );
}

function VTrack({ className = "" }) {
  return (
    <div className={"flex w-3 shrink-0 flex-col items-center justify-between bg-[#333] py-[2px] text-[#9a9a9a] " + className}>
      <Triangle dir="up" size={5} />
      <Triangle size={5} />
    </div>
  );
}

function LinksPanel() {
  return (
    <section className="flex shrink-0 flex-col text-[#bcbcbc]">
      <div className="flex h-[11px] items-center justify-end bg-[#2c2c2c] pr-1 text-[#8c8c8c]">
        <Triangle dir="right" size={4} />
        <Triangle dir="right" size={4} />
      </div>
      <Tabs items={["Sidor", "Lager", "Länkar"]} active="Länkar" h="h-[15px]" />
      <div className="flex h-4 items-center border-b border-[#3a3a3a] pl-1 pr-3 text-[8px] font-bold leading-none">
        Name
        <Glyph w={11} h={11} className="ml-auto"><path d="M8 1 2 14h12zM8 5v4M8 11v2" /></Glyph>
        <Glyph w={11} h={11} className="ml-3"><path d="M2 1h7l2 4v10H2z" fill="currentColor" /><path d="M13 9v6" /></Glyph>
        <Triangle size={5} className="ml-1" />
      </div>
      <div className="flex h-[108px]">
        <div className="flex-1" />
        <VTrack />
      </div>
      <div className="mr-3 flex h-[9px] items-center justify-between bg-[#333] px-1 text-[#9a9a9a]">
        <Triangle dir="left" size={5} />
        <Triangle dir="right" size={5} />
      </div>
      <div className="flex h-4 items-center border-b border-[#3a3a3a] pl-[2px] pr-[22px] text-[7px] font-bold leading-none">
        <Triangle className="mr-1" />
        0 länkar
        <span className="ml-auto flex gap-3 text-[#888]">
          <IconButton label="Länka om"><Glyph w={12} h={10}><path d="M7 5H2v6h5M9 5h5v6H9M5 8h6" /></Glyph></IconButton>
          <IconButton label="Gå till länk"><Glyph w={12} h={10}><path d="M1 9h8M6 6l3 3-3 3M9 3h4v10H9" /></Glyph></IconButton>
          <IconButton label="Uppdatera länk"><Glyph w={11} h={11}><path d="M3 10A5.500 5.500 0 0 1 12 4M13 6a5.500 5.500 0 0 1-9 6M12 1v3H9M4 15v-3h3" /></Glyph></IconButton>
          <IconButton label="Redigera original"><Glyph w={11} h={11}><path d="M2 14 13 2" strokeWidth="2" /></Glyph></IconButton>
        </span>
      </div>
      <div className="flex h-[17px] items-center pl-[2px] pr-[6px] text-[7px] font-bold leading-none">
        Länkinfo
        <span className="ml-auto flex gap-3 text-[#8a8a8a]">
          <Triangle dir="left" />
          <Triangle dir="right" />
        </span>
      </div>
      <div className="flex h-[58px]">
        <div className="flex-1" />
        <VTrack className="mb-3" />
      </div>
    </section>
  );
}

function CharIcon({ children, under }) {
  return (
    <span className={"font-[Liberation_Serif,serif] text-[12px] font-bold leading-none text-[#c4c4c4] " + (under ? "border-b border-[#aaa] leading-[10px]" : "")}>
      {children}
    </span>
  );
}

function CharRow({ a, b, className = "" }) {
  return (
    <div className={"flex h-3 items-center justify-between " + className}>
      <Field {...a} leadWidth="w-4" width="w-[34px]" />
      <Field {...b} leadWidth="w-4" width="w-[38px]" />
    </div>
  );
}

function CharacterPanel() {
  return (
    <section className="flex shrink-0 flex-col">
      <Tabs items={["Tecken", "Stycke"]} active="Tecken" />
      <div className="flex flex-col pt-[6px] pb-[7px] pl-[2px] pr-2">
        <label className="ml-1 flex h-3 items-center bg-[#a0a0a0] text-[#666]">
          <Glyph w={9} h={9} className="ml-[2px]"><circle cx="6" cy="6" r="4" /><path d="m9 9 5 5" /></Glyph>
          <input aria-label="Teckensnitt" defaultValue="Minion Pro" className="ml-1 min-w-0 flex-1 bg-transparent text-[8px] leading-none outline-none" />
          <Triangle className="mr-1" />
        </label>
        <div className="ml-1 mt-[5px] flex h-3 items-center gap-1 text-[#777]">
          <input aria-label="Teckenstil" defaultValue="Regular" className="h-3 min-w-0 flex-1 bg-[#a0a0a0] px-px text-[8px] leading-none text-[#3a3a3a] outline-none" />
          <Triangle />
        </div>
        <CharRow
          className="mt-[10px]"
          a={{ label: "Teckenstorlek", value: "12 pkt", arrow: true, lead: <CharIcon>тT</CharIcon> }}
          b={{ label: "Radavstånd", value: "(14,4 pkt)", arrow: true, lead: <CharIcon under>ıA</CharIcon> }}
        />
        <CharRow
          className="mt-[5px]"
          a={{ label: "Kerning", value: "Metrisk", arrow: true, lead: <span className="text-[10px]">VA</span> }}
          b={{ label: "Spärrning", value: "0", arrow: true, lead: <span className="border border-[#aaa] text-[8px]">VA</span> }}
        />
        <CharRow
          className="mt-[9px]"
          a={{ label: "Lodrät skala", value: "100 %", arrow: true, lead: <CharIcon>↕T</CharIcon> }}
          b={{ label: "Vågrät skala", value: "100 %", arrow: true, lead: <CharIcon under>T</CharIcon> }}
        />
        <div className="mt-[5px] flex h-3 items-center justify-between">
          <Field label="Baslinjeförskjutning" value="0 pkt" leadWidth="w-4" width="w-[44px]" lead={<CharIcon>A‡</CharIcon>} />
          <Field label="Lutning" value="0°" leadWidth="w-4" width="w-[47px]" lead={<CharIcon><i>T</i></CharIcon>} />
        </div>
        <label className="mt-[9px] flex h-3 items-center gap-2 pl-3 text-[8px] font-bold leading-none text-[#b4b4b4]">
          Språk:
          <select className="min-w-0 flex-1 appearance-none bg-transparent font-normal text-[#777] outline-none" defaultValue="Svenska">
            <option>Svenska</option>
          </select>
          <Triangle className="text-[#666]" />
        </label>
      </div>
    </section>
  );
}

const swatches = [
  { name: "[Inga]", kind: "none", lock: true },
  { name: "[Passermärke]", color: "bg-black", kind: "reg", lock: true },
  { name: "[Papper]", color: "bg-white", kind: "paper" },
  { name: "[Svart]", color: "bg-black", kind: "cmyk", lock: true, selected: true },
  { name: "C=100 M=0 Y=0 K=0", color: "bg-[#1b9fe0]", kind: "cmyk" },
  { name: "C=0 M=100 Y=0 K=0", color: "bg-[#e5097f]", kind: "cmyk" },
  { name: "C=0 M=0 Y=100 K=0", color: "bg-[#fbec15]", kind: "cmyk" },
  { name: "C=15 M=100 Y=100 K=0", color: "bg-[#d1101c]", kind: "cmyk" },
  { name: "C=75 M=5 Y=100 K=0", color: "bg-[#17b23f]", kind: "cmyk" },
];

function SwatchRow({ s }) {
  return (
    <li>
      <button
        type="button"
        className={
          "flex h-4 w-full items-center gap-[3px] border-b border-[#3d3d3d] pl-[11px] pr-[3px] text-left text-[7px] leading-none " +
          (s.selected ? "bg-[#465168] font-bold text-white" : "text-[#c2c2c2]")
        }
      >
        {s.kind === "none" ? <NoneSwatch size={10} /> : <span className={"size-[10px] shrink-0 border border-[#2e2e2e] " + s.color} />}
        <span className="flex-1 whitespace-nowrap">{s.name}</span>
        {s.lock && (
          <Glyph w={10} h={10} className={s.kind === "cmyk" ? "" : "mr-[12px]"}><path d="M2 14 14 2M2 2l12 12M12 1l3 3" strokeWidth="1.800" /></Glyph>
        )}
        {s.kind === "cmyk" && (
          <>
            <Glyph w={9} h={9} className="text-[#9a9a9a]"><path d="M2 2h12v12H2z" fill="#777" strokeWidth="2" /></Glyph>
            <svg width="10" height="10" viewBox="0 0 10 10" aria-hidden="true">
              <path d="M0 0h10v10H0z" fill="#e8e8e8" />
              <path d="M1 1h8L5 5z" fill="#d81b80" />
              <path d="M1 1v8l4-4z" fill="#29a3d8" />
              <path d="M9 1v8L5 5z" fill="#e8dc2c" />
              <path d="M1 9h8L5 5z" fill="#111" />
              <path d="M3 3h4v4H3z" fill="#111" />
            </svg>
          </>
        )}
        {s.kind === "none" && <NoneSwatch size={10} />}
        {s.kind === "reg" && (
          <Glyph w={10} h={10}><path d="M1 1h14v14H1z" fill="#999" /><path d="M8 2v12M2 8h12" stroke="#444" /><circle cx="8" cy="8" r="3" stroke="#444" /></Glyph>
        )}
      </button>
    </li>
  );
}

function SwatchesPanel() {
  return (
    <section className="flex min-h-0 flex-1 flex-col text-[#a8a8a8]">
      <Tabs items={["Linje", "Färg", "Färgrutor"]} active="Färgrutor" />
      <div className="flex h-5 shrink-0 items-center pl-1 pr-[18px] text-[8px] leading-none">
        <svg width="16" height="16" viewBox="0 0 16 16" aria-hidden="true">
          <path d="M6 6h9v9H6z" fill="#fff" />
          <path d="M9 9h3v3H9z" fill="#333" />
          <path d="m6 15 9-9" stroke="#d8143c" strokeWidth="1.500" />
          <path d="M0 1h8v8H0z" fill="#000" />
          <path d="M10 2q4 0 4 3" stroke="#aaa" fill="none" />
        </svg>
        <Glyph w={10} h={10} className="ml-[9px]"><path d="M3 3h10v10H3z" /></Glyph>
        <Glyph w={10} h={10} className="ml-[2px] text-[#777]"><path d="M3 3h10M8 3v11" /></Glyph>
        <label className="ml-auto flex items-center gap-1 text-[7px] font-bold">
          Färgton:
          <input defaultValue="100" className="h-[10px] w-6 bg-[#a3a3a3] px-px text-[8px] font-normal leading-none text-[#444] outline-none" />
        </label>
        <Triangle dir="right" size={5} className="mx-1" />
        %
      </div>
      <div className="flex min-h-0 flex-1">
        <ul className="min-w-0 flex-1 overflow-hidden border-t border-[#3a3a3a]">
          {swatches.map((s) => <SwatchRow key={s.name} s={s} />)}
        </ul>
        <div className="flex w-3 shrink-0 flex-col items-center bg-[#333] py-[2px]">
          <Triangle dir="up" size={5} className="text-[#ddd]" />
          <span className="mt-[5px] h-[9px] w-2 bg-[#8d8d8d]" />
          <Triangle size={5} className="mt-auto text-[#c8c88a]" />
        </div>
      </div>
      <div className="flex h-4 shrink-0 items-center justify-end gap-[13px] bg-[#404040] pr-5">
        <IconButton label="Visa färgrutor"><Glyph w={12} h={11}><path d="M1 3h10v8H1zM1 7h10M15 12v2h-2z" /></Glyph></IconButton>
        <IconButton label="Ny färggrupp"><Glyph w={12} h={11}><path d="M2 4h4l1 2h7v7H2z" fill="currentColor" /></Glyph></IconButton>
        <IconButton label="Ny färgruta"><Glyph w={12} h={11}><path d="M2 3h11v10H8V8H2z" fill="currentColor" /></Glyph></IconButton>
        <IconButton label="Ta bort färgruta" className="text-[#666]"><Glyph w={12} h={11}><path d="M3 5h10M4 5v9h8V5M6 3h4" /></Glyph></IconButton>
      </div>
    </section>
  );
}

/* ---------- dock ---------- */

function Adobe({ text, bg, fg }) {
  return (
    <>
      <rect x="1.500" y="1.500" width="25" height="25" fill={bg} stroke={fg} strokeOpacity=".7" strokeWidth="1.400" />
      <text x="14" y="19" textAnchor="middle" fontSize="14" fill={fg}>{text}</text>
    </>
  );
}

const dockApps = [
  { name: "Finder", run: true, art: <><path d="M1 2h26v24H1z" fill="#e4eef5" /><path d="M1 2h14q-3 7-2 12h3v12H1z" fill="#2ba0ee" /><path d="M8 8v4M20 8v4M6 18q8 6 16 0" stroke="#17395a" strokeWidth="1.500" fill="none" /></> },
  { name: "Launchpad", art: <><circle cx="14" cy="14" r="13" fill="#aab0b0" /><circle cx="14" cy="14" r="10.500" fill="#8b9191" /><path d="M21 6q-7 1-10 7l-4 1 4 3 3 4 2-4q5-4 5-11z" fill="#3b3f40" /></> },
  { name: "Chrome", run: true, art: <><circle cx="14" cy="14" r="13" fill="#2ba24c" /><path d="M2.500 8A13 13 0 0 1 26 9H14l-5 7z" fill="#df3127" /><path d="M26 9a13 13 0 0 1-13 18l6-10q1-4-5-8z" fill="#fbd02d" /><circle cx="14" cy="14" r="6" fill="#f3f3f3" /><circle cx="14" cy="14" r="4.700" fill="#3d87e6" /></> },
  { name: "Safari", run: true, art: <><circle cx="14" cy="14" r="13" fill="#d7dde2" /><circle cx="14" cy="14" r="11.500" fill="#2b8fe0" /><path d="m22 6-6 10-4-4z" fill="#e8432e" /><path d="m6 22 6-10 4 4z" fill="#fff" /></> },
  { name: "Mail", run: true, badge: true, art: <><path d="m2 6 20-4 4 20-20 4z" fill="#e6eef5" /><path d="m4 7 17-3 3 17-17 3z" fill="#69a7da" /><path d="M5 19q5 1 8-5 3-7 7-7-3 4-1 7 1 5 4 6-7 2-11-2-3 4-7 1z" fill="#5f5446" /><path d="M8 10q3 0 5 3" stroke="#efe9dc" strokeWidth="2" fill="none" /></> },
  { name: "iMovie", art: <><path d="m14 1 4 8 9 1-6.500 6.500L22 26l-8-4-8 4 1.500-9.500L1 10l9-1z" fill="#5a1ca8" stroke="#d8d0e6" strokeWidth="1.500" /><path d="M9 12h7v5H9zM16 14l3-2v5l-3-2z" fill="#e9e2ff" /></> },
  { name: "Film", art: <><path d="m2 5 19-3 4 22-19 2z" fill="#d6d3cb" /><path d="m1 2 20-1v5L2 7z" fill="#2f3130" /><path d="m20 10 5 0 1 14-5 1z" fill="#ef6a20" /><path d="m6 10 12-1 2 14-12 1z" fill="#bdbdb8" /></> },
  { name: "Kontakter", art: <><path d="m3 2 20 1 2 22-21 1z" fill="#b07c45" /><path d="m4 3 3 0 1 22-4 0z" fill="#8a5b2d" /><path d="M12 18q4-4 8 0v3h-8z" fill="#9c6935" /><circle cx="16" cy="12" r="3" fill="#9c6935" /></> },
  { name: "Kalender", art: <><path d="M2 4 24 2l3 22-24 2z" fill="#f4f4f2" /><path d="m2 3 22-2 1 7-22 2z" fill="#d8323a" /><text x="14.500" y="22" textAnchor="middle" fontSize="14" fill="#333">9</text></> },
  { name: "Anteckningar", art: <><path d="m3 3 20-1 3 23-20 1z" fill="#fbfaf0" /><path d="m3 2 20-1 1 7-20 1z" fill="#f7d12f" /><path d="M6 13h17M6 17h17M7 21h17" stroke="#e6e4d6" /></> },
  { name: "Kartor", art: <><path d="m2 5 22-3 2 21-20 3z" fill="#ece9dc" /><path d="m3 15 12-10 8 0-18 16z" fill="#90c46a" /><path d="m8 23 12-13 5 3-9 11z" fill="#74aee0" /><circle cx="20" cy="18" r="5" fill="#f2f2ee" stroke="#b5b5ac" /></> },
  { name: "Skype", art: <><circle cx="14" cy="14" r="13" fill="#1ca4ee" /><text x="14" y="21" textAnchor="middle" fontSize="20" fontWeight="bold" fill="#fff">S</text></> },
  { name: "Meddelanden", run: true, art: <><circle cx="13" cy="12" r="12" fill="#1e8ff0" /><ellipse cx="18" cy="18" rx="9" ry="7" fill="#eef3fa" /><path d="M13 18h2M17 18h2M21 18h2" stroke="#7f8fa5" strokeWidth="2" /></> },
  { name: "FaceTime", art: <><rect x="0" y="2" width="24" height="22" rx="3" fill="#25d554" /><path d="M4 9h11v9H4zM15 12l6-4v10l-6-4z" fill="#f2fff4" /><circle cx="22" cy="21" r="5.500" fill="#dff5e3" /></> },
  { name: "Photo Booth", art: <><path d="M2 2h23v23H2z" fill="#7c2430" /><path d="M2 9h23M2 17h23M9 2v23M17 2v23" stroke="#c98785" strokeWidth="1.500" /><circle cx="21" cy="20" r="6.500" fill="#2c2c30" /><circle cx="21" cy="20" r="3" fill="#5c6470" /></> },
  { name: "iPhoto", art: <><path d="M2 3h23v22H2z" fill="#ced9d8" /><path d="M2 12q6-8 12-2t11-3V3H2z" fill="#2f8fa0" /><path d="m12 2 5 9M8 10l6-5" stroke="#222" strokeWidth="2" /><circle cx="18" cy="18" r="6.500" fill="#5b7078" /><circle cx="18" cy="18" r="3" fill="#22303a" /></> },
  { name: "Dreamweaver", art: <Adobe text="Dw" bg="#053a12" fg="#35d53a" /> },
  { name: "Photoshop", art: <Adobe text="Ps" bg="#0a1d38" fg="#2fb4e8" /> },
  { name: "Illustrator", art: <Adobe text="Ai" bg="#3a1a08" fg="#e8761a" /> },
  { name: "InDesign", run: true, art: <Adobe text="Id" bg="#43061f" fg="#b5135f" /> },
  { name: "Pages", art: <><path d="m3 4 20-2 3 22-21 2z" fill="#f5f3ea" /><path d="m3 3 20-2v5L4 8z" fill="#f0982c" /><path d="m7 11 9-1 1 8-9 1z" fill="#4e86b8" /><path d="M24 7 14 22l-1 3 3-2L26 9z" fill="#55524b" /></> },
  { name: "Numbers", art: <><path d="M1 18h5v8H1z" fill="#f3f3f3" /><path d="M2 19h4v7H2z" fill="#c23a9d" /><path d="M6 13h5v13H6z" fill="#ee3b31" /><path d="M11 9h5v17h-5z" fill="#f5a423" /><path d="M16 2h5v24h-5z" fill="#3ac24c" /><path d="M21 11h5v15h-5z" fill="#279fe2" /></> },
  { name: "Keynote", art: <><path d="M4 3h20l3 8H1z" fill="#2aa4e8" /><path d="M7 3h14v4H7z" fill="#e8f4fb" /><path d="M13 11h2v13h-2zM8 24h12v2H8z" fill="#e3e8e4" /></> },
  { name: "GarageBand", run: true, art: <><path d="M2 22q0-8 8-9l14-11 2 3-10 12q-3 9-10 9-4 0-4-4z" fill="#8a5626" /><path d="m4 8 20 14" stroke="#3c2b19" strokeWidth="3" /><circle cx="10" cy="19" r="3" fill="#3b1f0b" /></> },
  { name: "Avast", art: <><path d="m14 6 10-4-4 9 6 13-11-5-11 6 3-10-6-7z" fill="#f57f1c" /><circle cx="13" cy="13" r="6.500" fill="#e8e4d8" /><text x="13" y="17" textAnchor="middle" fontSize="11" fontWeight="bold" fill="#4d4d42">a</text></> },
  { name: "Cyberduck", art: <><ellipse cx="14" cy="20" rx="12" ry="7" fill="#f6cf1d" /><circle cx="14" cy="9" r="8" fill="#fbdc2d" /><path d="M18 8h8l-2 4h-6z" fill="#ee7c1b" /><circle cx="16" cy="6" r="1.200" fill="#222" /></> },
  { name: "iTunes", art: <><circle cx="14" cy="14" r="13" fill="#f2dde2" /><circle cx="14" cy="14" r="11.700" fill="#e52746" /><path d="M11 19V8l8-2v11" stroke="#fff" strokeWidth="2" fill="none" /><circle cx="9.500" cy="19" r="2.300" fill="#fff" /><circle cx="17.500" cy="17" r="2.300" fill="#fff" /></> },
  { name: "iBooks", art: <><circle cx="14" cy="14" r="13" fill="#f3e1c8" /><circle cx="14" cy="14" r="11.700" fill="#f4811f" /><path d="M6 9q5-1 8 1 3-2 8-1v9q-5-1-8 1-3-2-8-1z" fill="#fff" /><path d="M14 10v9" stroke="#f4811f" /></> },
  { name: "App Store", badge: true, art: <><circle cx="14" cy="14" r="13" fill="#d8e6f2" /><circle cx="14" cy="14" r="11.700" fill="#1d87ec" /><path d="m8 20 6-12 6 12M6 16h16" stroke="#fff" strokeWidth="2" fill="none" /></> },
  { name: "Systeminställningar", art: <><path d="M1 2h26v24H1z" fill="#a9adae" /><circle cx="14" cy="14" r="11" fill="#4a4d50" /><circle cx="14" cy="14" r="7" fill="none" stroke="#b9bcbe" strokeWidth="2" /><path d="m14 14 7 0M14 14l-4-6M14 14l-4 6" stroke="#b9bcbe" strokeWidth="1.500" /></> },
  { name: "Wunderlist", run: true, art: <><path d="M2 2h24v24H2z" fill="#f2f0ec" /><path d="M7 2h14v24l-7-5-7 5z" fill="#dd1f26" /><path d="M2 2h4v24H2zM22 2h4v24h-4z" fill="#dd1f26" /><path d="m14 9 1.500 3h3.500l-2.700 2.200 1 3.500-3.300-2-3.300 2 1-3.500L9 12h3.500z" fill="#fff" /></> },
  { name: "QuickTime", run: true, art: <><circle cx="14" cy="13.500" r="12.500" fill="#32363c" /><circle cx="14" cy="13.500" r="8.500" fill="#1d5fc4" /><path d="M9 8q7-3 10 3-4 7-9 5z" fill="#5ba7f0" /><path d="m17 18 8 2 1 6-7-1z" fill="#22262b" /></> },
];

function DockItem({ app }) {
  return (
    <li className="flex min-w-0 flex-1 justify-center">
      <button type="button" aria-label={app.name} className="flex flex-col items-center gap-[2px]">
        <svg width="27" height="27" viewBox="0 0 28 28" className="overflow-visible" aria-hidden="true">
          {app.art}
          {app.badge && (
            <>
              <circle cx="23" cy="3.500" r="5.500" fill="#dc1f2c" />
              <text x="23" y="6.500" textAnchor="middle" fontSize="8" fill="#fff">1</text>
            </>
          )}
        </svg>
        {app.run && <span className="h-[3px] w-1 rounded-full bg-[#16280c]" />}
      </button>
    </li>
  );
}

function Dock() {
  return (
    <footer className="flex h-[39px] shrink-0 justify-center bg-linear-to-r from-[#1d4f17] via-[#3b7f24] to-[#236b1a] pl-[26px] pr-[25px]">
      <div className="flex min-w-0 flex-1 border-t border-[#86b566] bg-linear-to-b from-[#5d9a36] to-[#5fa334] pt-1">
        <ul className="ml-px flex min-w-0 flex-1">
          {dockApps.map((a) => <DockItem key={a.name} app={a} />)}
        </ul>
        <span className="ml-[6px] mr-[3px] h-7 w-px bg-[#47802a]" />
        <ul className="flex w-[66px] shrink-0">
          <DockItem
            app={{ name: "Dokument", art: <><path d="M4 1h14l6 6v20H4z" fill="#f7f8f4" /><path d="M18 1v6h6z" fill="#cfd3c8" /></> }}
          />
          <DockItem
            app={{ name: "Papperskorg", art: <><path d="M3 3h22l-4 24H7z" fill="#d5dbd3" /><path d="M2 2h24v2H2z" fill="#f1f4ef" /><path d="m9 5 2 20M14 5v20M19 5l-2 20" stroke="#c6cec3" /></> }}
          />
        </ul>
        <span className="w-1 shrink-0" />
      </div>
    </footer>
  );
}

export default function App() {
  return (
    <div className="flex h-screen flex-col overflow-hidden bg-black px-[5%] font-[Liberation_Sans,Arial,sans-serif]">
      <MenuBar />
      <AppBar />
      <ControlBar />
      <div className="flex min-h-0 flex-1">
        <Tools />
        <Document />
        <aside className="flex w-[168px] shrink-0 flex-col border-l-2 border-[#2b2b2b] bg-[#474747]">
          <LinksPanel />
          <CharacterPanel />
          <SwatchesPanel />
        </aside>
      </div>
      <Dock />
    </div>
  );
}
